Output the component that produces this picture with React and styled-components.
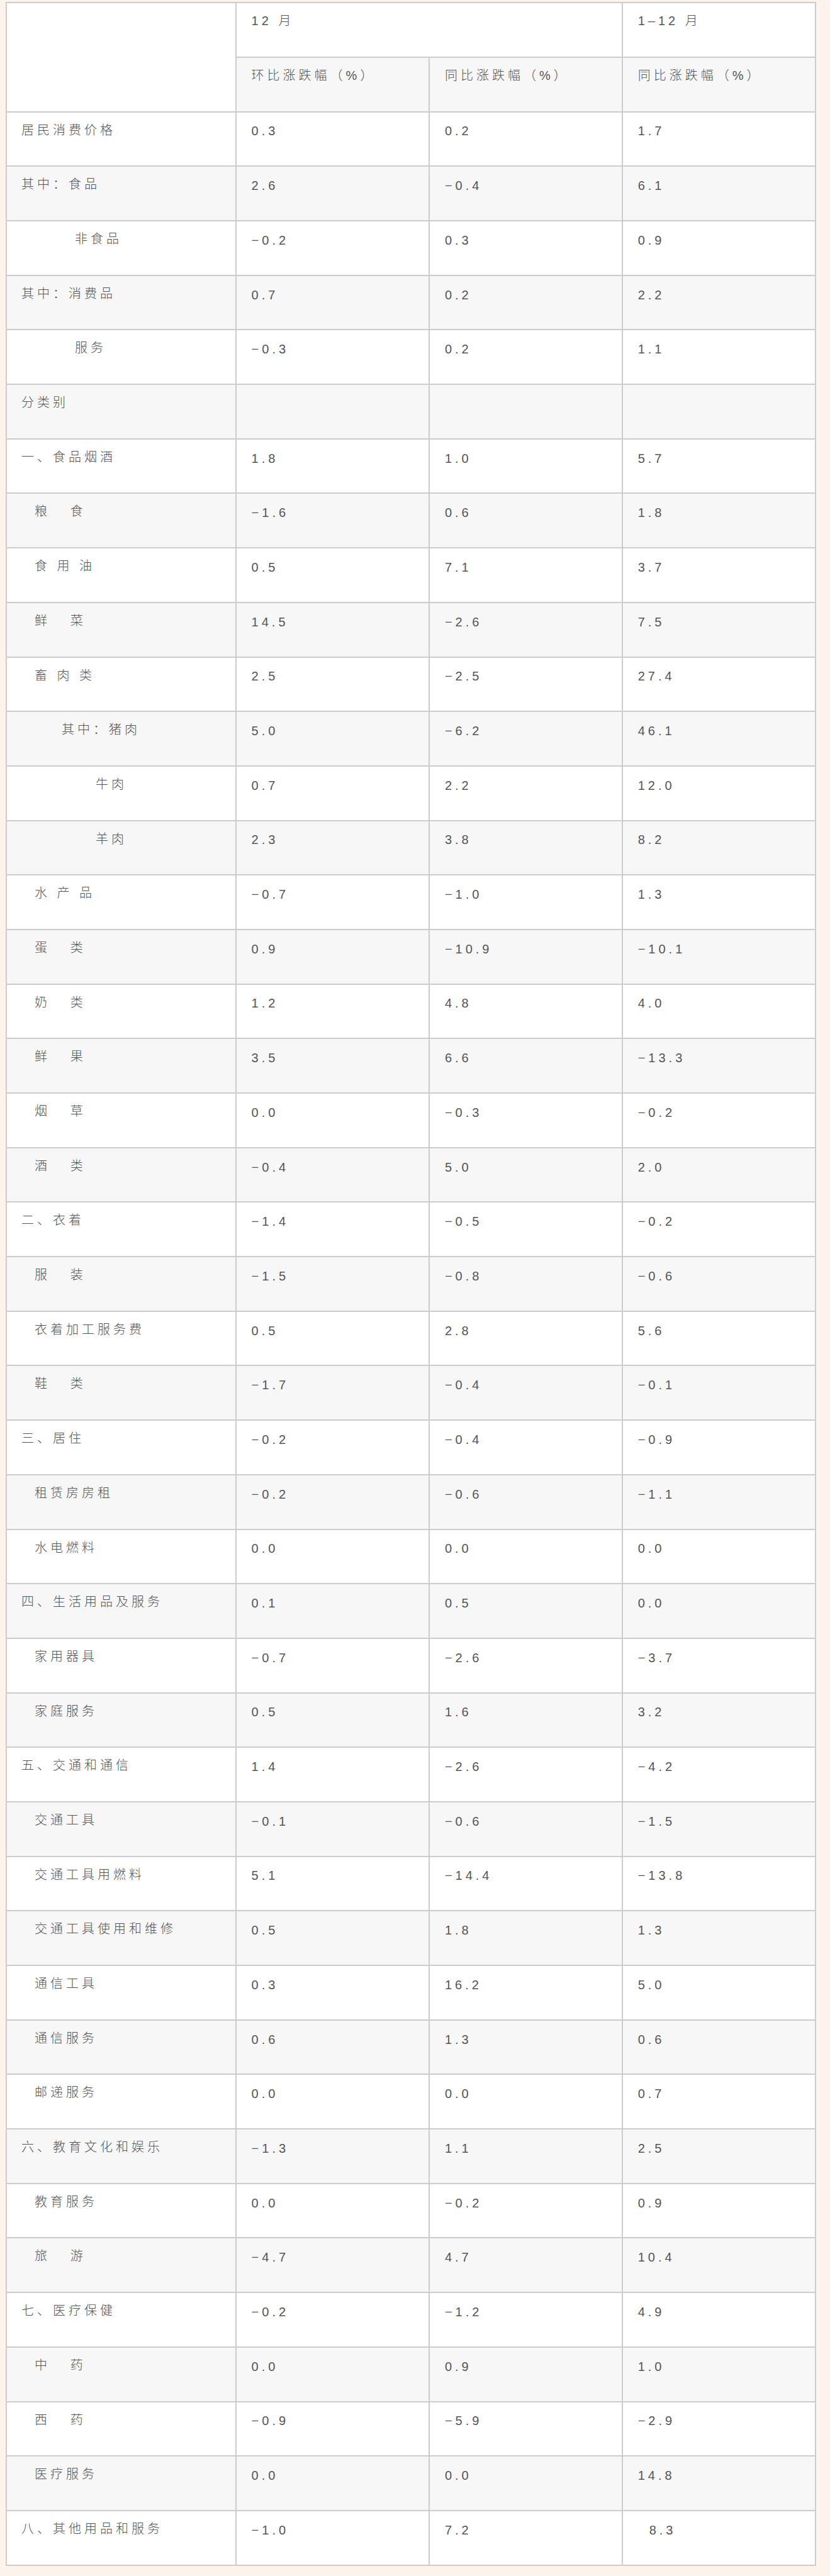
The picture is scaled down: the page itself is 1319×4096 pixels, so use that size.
import React from 'react'
import styled, { createGlobalStyle, css } from 'styled-components'

// 居民消费价格分月涨跌幅表
const rows = [
  { name: '居民消费价格', v: ['0.3', '0.2', '1.7'] },
  { name: '其中：食品', v: ['2.6', '−0.4', '6.1'] },
  { name: '非食品', indent: 85, v: ['−0.2', '0.3', '0.9'] },
  { name: '其中：消费品', v: ['0.7', '0.2', '2.2'] },
  { name: '服务', indent: 85, v: ['−0.3', '0.2', '1.1'] },
  { name: '分类别', v: ['', '', ''] },
  { name: '一、食品烟酒', v: ['1.8', '1.0', '5.7'] },
  { name: '粮   食', indent: 21, v: ['−1.6', '0.6', '1.8'] },
  { name: '食 用 油', indent: 21, v: ['0.5', '7.1', '3.7'] },
  { name: '鲜   菜', indent: 21, v: ['14.5', '−2.6', '7.5'] },
  { name: '畜 肉 类', indent: 21, v: ['2.5', '−2.5', '27.4'] },
  { name: '其中：猪肉', indent: 64, v: ['5.0', '−6.2', '46.1'] },
  { name: '牛肉', indent: 118, v: ['0.7', '2.2', '12.0'] },
  { name: '羊肉', indent: 118, v: ['2.3', '3.8', '8.2'] },
  { name: '水 产 品', indent: 21, v: ['−0.7', '−1.0', '1.3'] },
  { name: '蛋   类', indent: 21, v: ['0.9', '−10.9', '−10.1'] },
  { name: '奶   类', indent: 21, v: ['1.2', '4.8', '4.0'] },
  { name: '鲜   果', indent: 21, v: ['3.5', '6.6', '−13.3'] },
  { name: '烟   草', indent: 21, v: ['0.0', '−0.3', '−0.2'] },
  { name: '酒   类', indent: 21, v: ['−0.4', '5.0', '2.0'] },
  { name: '二、衣着', v: ['−1.4', '−0.5', '−0.2'] },
  { name: '服   装', indent: 21, v: ['−1.5', '−0.8', '−0.6'] },
  { name: '衣着加工服务费', indent: 21, v: ['0.5', '2.8', '5.6'] },
  { name: '鞋   类', indent: 21, v: ['−1.7', '−0.4', '−0.1'] },
  { name: '三、居住', v: ['−0.2', '−0.4', '−0.9'] },
  { name: '租赁房房租', indent: 21, v: ['−0.2', '−0.6', '−1.1'] },
  { name: '水电燃料', indent: 21, v: ['0.0', '0.0', '0.0'] },
  { name: '四、生活用品及服务', v: ['0.1', '0.5', '0.0'] },
  { name: '家用器具', indent: 21, v: ['−0.7', '−2.6', '−3.7'] },
  { name: '家庭服务', indent: 21, v: ['0.5', '1.6', '3.2'] },
  { name: '五、交通和通信', v: ['1.4', '−2.6', '−4.2'] },
  { name: '交通工具', indent: 21, v: ['−0.1', '−0.6', '−1.5'] },
  { name: '交通工具用燃料', indent: 21, v: ['5.1', '−14.4', '−13.8'] },
  { name: '交通工具使用和维修', indent: 21, v: ['0.5', '1.8', '1.3'] },
  { name: '通信工具', indent: 21, v: ['0.3', '16.2', '5.0'] },
  { name: '通信服务', indent: 21, v: ['0.6', '1.3', '0.6'] },
  { name: '邮递服务', indent: 21, v: ['0.0', '0.0', '0.7'] },
  { name: '六、教育文化和娱乐', v: ['−1.3', '1.1', '2.5'] },
  { name: '教育服务', indent: 21, v: ['0.0', '−0.2', '0.9'] },
  { name: '旅   游', indent: 21, v: ['−4.7', '4.7', '10.4'] },
  { name: '七、医疗保健', v: ['−0.2', '−1.2', '4.9'] },
  { name: '中   药', indent: 21, v: ['0.0', '0.9', '1.0'] },
  { name: '西   药', indent: 21, v: ['−0.9', '−5.9', '−2.9'] },
  { name: '医疗服务', indent: 21, v: ['0.0', '0.0', '14.8'] },
  { name: '八、其他用品和服务', v: ['−1.0', '7.2', '8.3'], lastIndent: 18 },
]

const App = () => {
  return (
    <Page>
      <GlobalStyle />
      <Sheet>
        <Corner />
        <Label $span>12 月</Label>
        <Label>1–12 月</Label>
        <Label $shade>环比涨跌幅（%）</Label>
        <Label $shade>同比涨跌幅（%）</Label>
        <Label $shade>同比涨跌幅（%）</Label>
        {rows.map((row, i) => {
          const shade = i % 2 === 1
          return (
            <React.Fragment key={row.name}>
              <Label $shade={shade} $indent={row.indent || 0}>{row.name}</Label>
              {row.v.map((val, j) => (
                <Num
                  key={j}
                  $shade={shade}
                  $indent={j === 2 ? row.lastIndent || 0 : 0}
                >
                  {val}
                </Num>
              ))}
            </React.Fragment>
          )
        })}
      </Sheet>
    </Page>
  )
}

export default App

const GlobalStyle = createGlobalStyle`
  html, body {
    margin: 0;
    padding: 0;
    background: #fcf3ec;
  }
`

const Page = styled.div`
  padding: 3.3px 0 16px 8.5px;
  background: #fcf3ec;
`

const Sheet = styled.div`
  display: grid;
  grid-template-columns: 365.6px 307.3px 306.8px 307.2px;
  grid-auto-rows: 86.7px;
  width: fit-content;
  border-left: 2px solid #cccccc;
  border-top: 2px solid #cccccc;
`

const cellBase = css`
  box-sizing: border-box;
  border-right: 2px solid #cccccc;
  border-bottom: 2px solid #cccccc;
  background: ${p => (p.$shade ? '#f7f7f7' : '#ffffff')};
  padding-left: ${p => 23.5 + (p.$indent || 0)}px;
  font-family: "Liberation Sans", "Noto Sans CJK SC", sans-serif;
  font-size: 20px;
  font-weight: 300;
  line-height: 26px;
  letter-spacing: 5px;
  color: #555555;
  white-space: pre;
  overflow: hidden;
`

const Corner = styled.div`
  ${cellBase}
  grid-row: span 2;
`

const Label = styled.div`
  ${cellBase}
  padding-top: 15px;
  grid-column: ${p => (p.$span ? 'span 2' : 'auto')};
`

const Num = styled.div`
  ${cellBase}
  padding-top: 16.8px;
`
